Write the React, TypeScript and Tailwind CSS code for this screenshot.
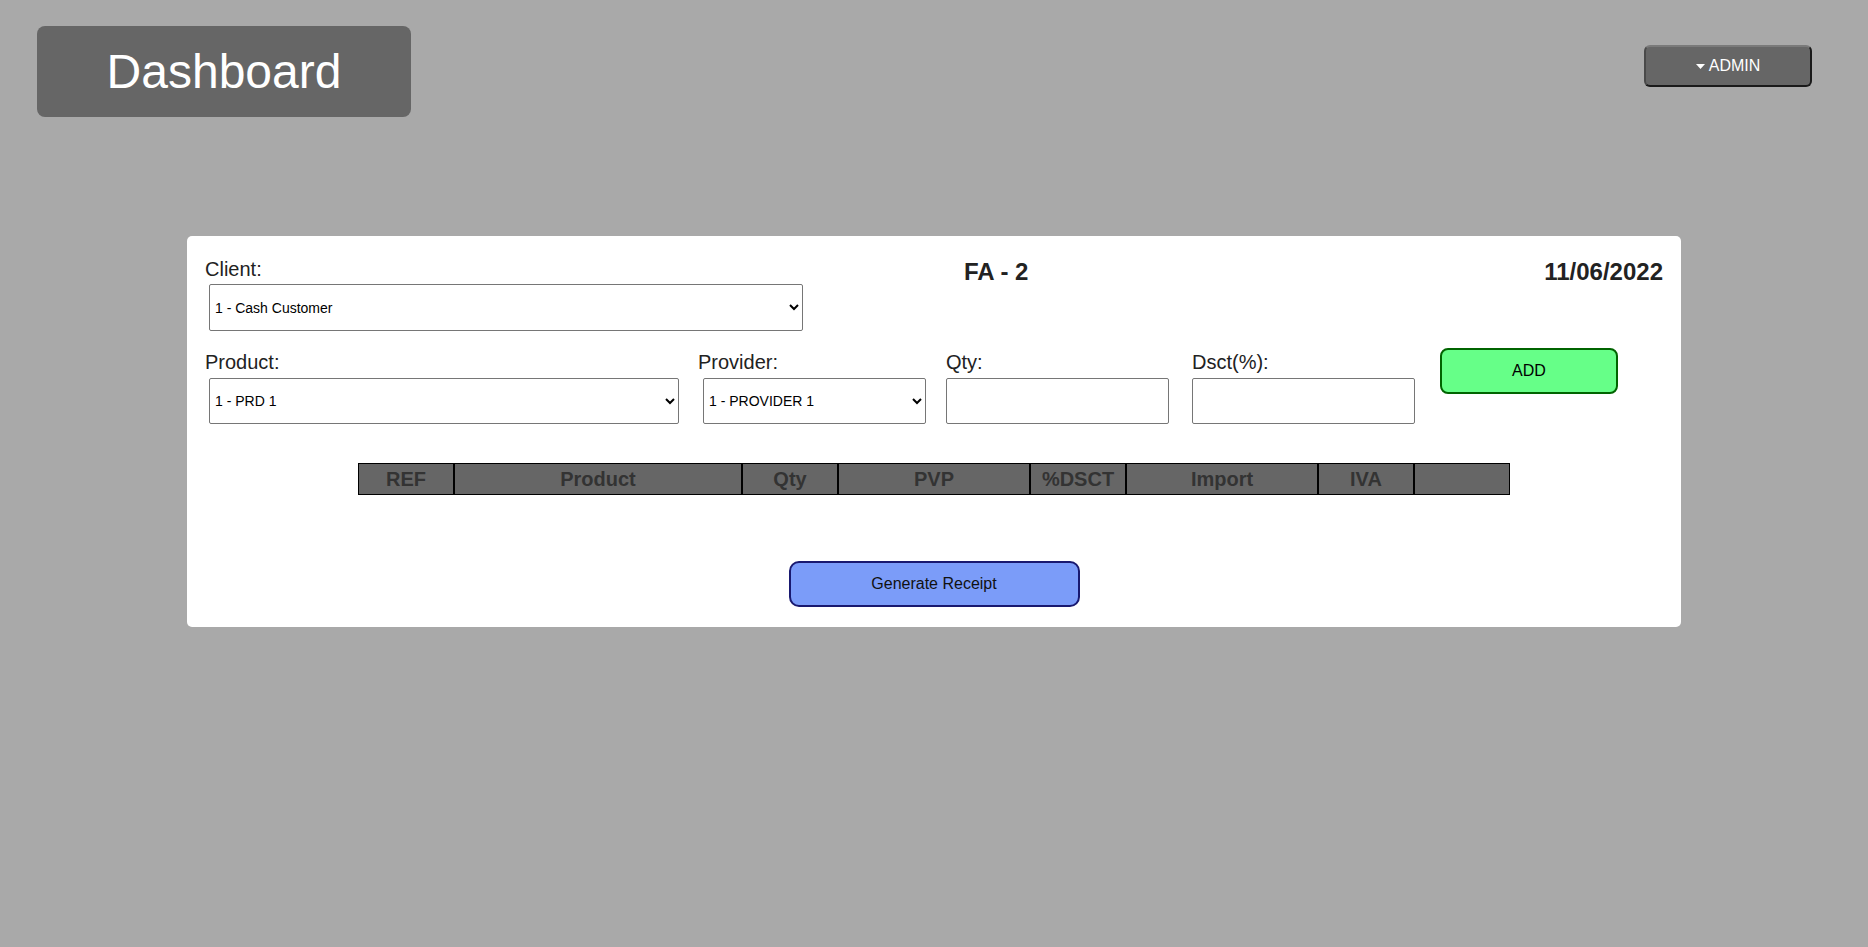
import React from "react";

const labelCls = "block text-[20px] leading-[22px] text-[#222]";
const selectCls =
  "block bg-white border border-[#767676] rounded-[2px] text-[14px] text-black pl-[1px] pr-[6px] outline-none";
const inputCls = "block bg-white border border-[#767676] rounded-[2px] text-[14px] text-black px-1 outline-none";

const cols: { label: string; w: string }[] = [
  { label: "REF", w: "w-[96px]" },
  { label: "Product", w: "w-[288px]" },
  { label: "Qty", w: "w-[96px]" },
  { label: "PVP", w: "w-[192px]" },
  { label: "%DSCT", w: "w-[96px]" },
  { label: "Import", w: "w-[192px]" },
  { label: "IVA", w: "w-[96px]" },
  { label: "", w: "w-[96px]" },
];

export default function App() {
  return (
    <div className="min-h-[947px] w-full bg-[#a9a9a9] font-['Liberation_Sans',Arial,sans-serif]">
      <header className="flex items-start justify-between pl-[37px] pr-[56px] pt-[26px]">
        <div className="flex h-[91px] w-[374px] items-center justify-center rounded-lg bg-[#666] text-[48px] text-white">
          Dashboard
        </div>
        <button className="mt-[19px] flex h-[42px] w-[168px] items-center justify-center gap-[4px] rounded-[6px] border-2 border-b-[#1a1a1a] border-l-[#4a4a4a] border-r-[#1a1a1a] border-t-[#7a7a7a] bg-[#666] text-[16px] text-white">
          <svg width="9" height="5" viewBox="0 0 9 5" className="mt-[1px]">
            <path d="M0 0 L9 0 L4.5 5 Z" fill="#fff" />
          </svg>
          <span>ADMIN</span>
        </button>
      </header>

      <main className="mx-auto mt-[119px] w-[1494px] rounded-[5px] bg-white px-[18px] pb-[20px] pt-[22px]">
        <div className="flex items-start">
          <div className="w-[759px]">
            <label className={labelCls}>Client:</label>
            <select className={`${selectCls} ml-[4px] mt-[4px] h-[47px] w-[594px]`} defaultValue="1">
              <option value="1">1 - Cash Customer</option>
            </select>
          </div>
          <div className="text-[24px] font-bold leading-[28px] text-[#222]">FA - 2</div>
          <div className="ml-auto text-[24px] font-bold leading-[28px] text-[#222]">11/06/2022</div>
        </div>

        <div className="mt-[17px] flex items-start">
          <div className="w-[493px] pt-[3px]">
            <label className={labelCls}>Product:</label>
            <select className={`${selectCls} ml-[4px] mt-[5px] h-[46px] w-[470px]`} defaultValue="1">
              <option value="1">1 - PRD 1</option>
            </select>
          </div>
          <div className="w-[248px] pt-[3px]">
            <label className={labelCls}>Provider:</label>
            <select className={`${selectCls} ml-[5px] mt-[5px] h-[46px] w-[223px]`} defaultValue="1">
              <option value="1">1 - PROVIDER 1</option>
            </select>
          </div>
          <div className="w-[246px] pt-[3px]">
            <label className={labelCls}>Qty:</label>
            <input type="text" className={`${inputCls} mt-[5px] h-[46px] w-[223px]`} />
          </div>
          <div className="w-[248px] pt-[3px]">
            <label className={labelCls}>Dsct(%):</label>
            <input type="text" className={`${inputCls} mt-[5px] h-[46px] w-[223px]`} />
          </div>
          <button className="h-[46px] w-[178px] rounded-[8px] border-2 border-[#006400] bg-[#66ff88] text-[16px] text-black">
            ADD
          </button>
        </div>

        <table className="mx-auto mt-[39px] w-[1152px] table-fixed border-separate border-spacing-0">
          <thead>
            <tr className="h-[32px] bg-[#666]">
              {cols.map((c, i) => (
                <th
                  key={i}
                  className={`${c.w} border border-black p-0 text-center text-[20px] font-bold leading-[23px] text-[#333]`}
                >
                  {c.label}
                </th>
              ))}
            </tr>
          </thead>
          <tbody />
        </table>

        <div className="mt-[66px] flex justify-center">
          <button className="h-[46px] w-[291px] rounded-[10px] border-2 border-[#191970] bg-[#7b9cf9] text-[16px] text-[#111]">
            Generate Receipt
          </button>
        </div>
      </main>
    </div>
  );
}
